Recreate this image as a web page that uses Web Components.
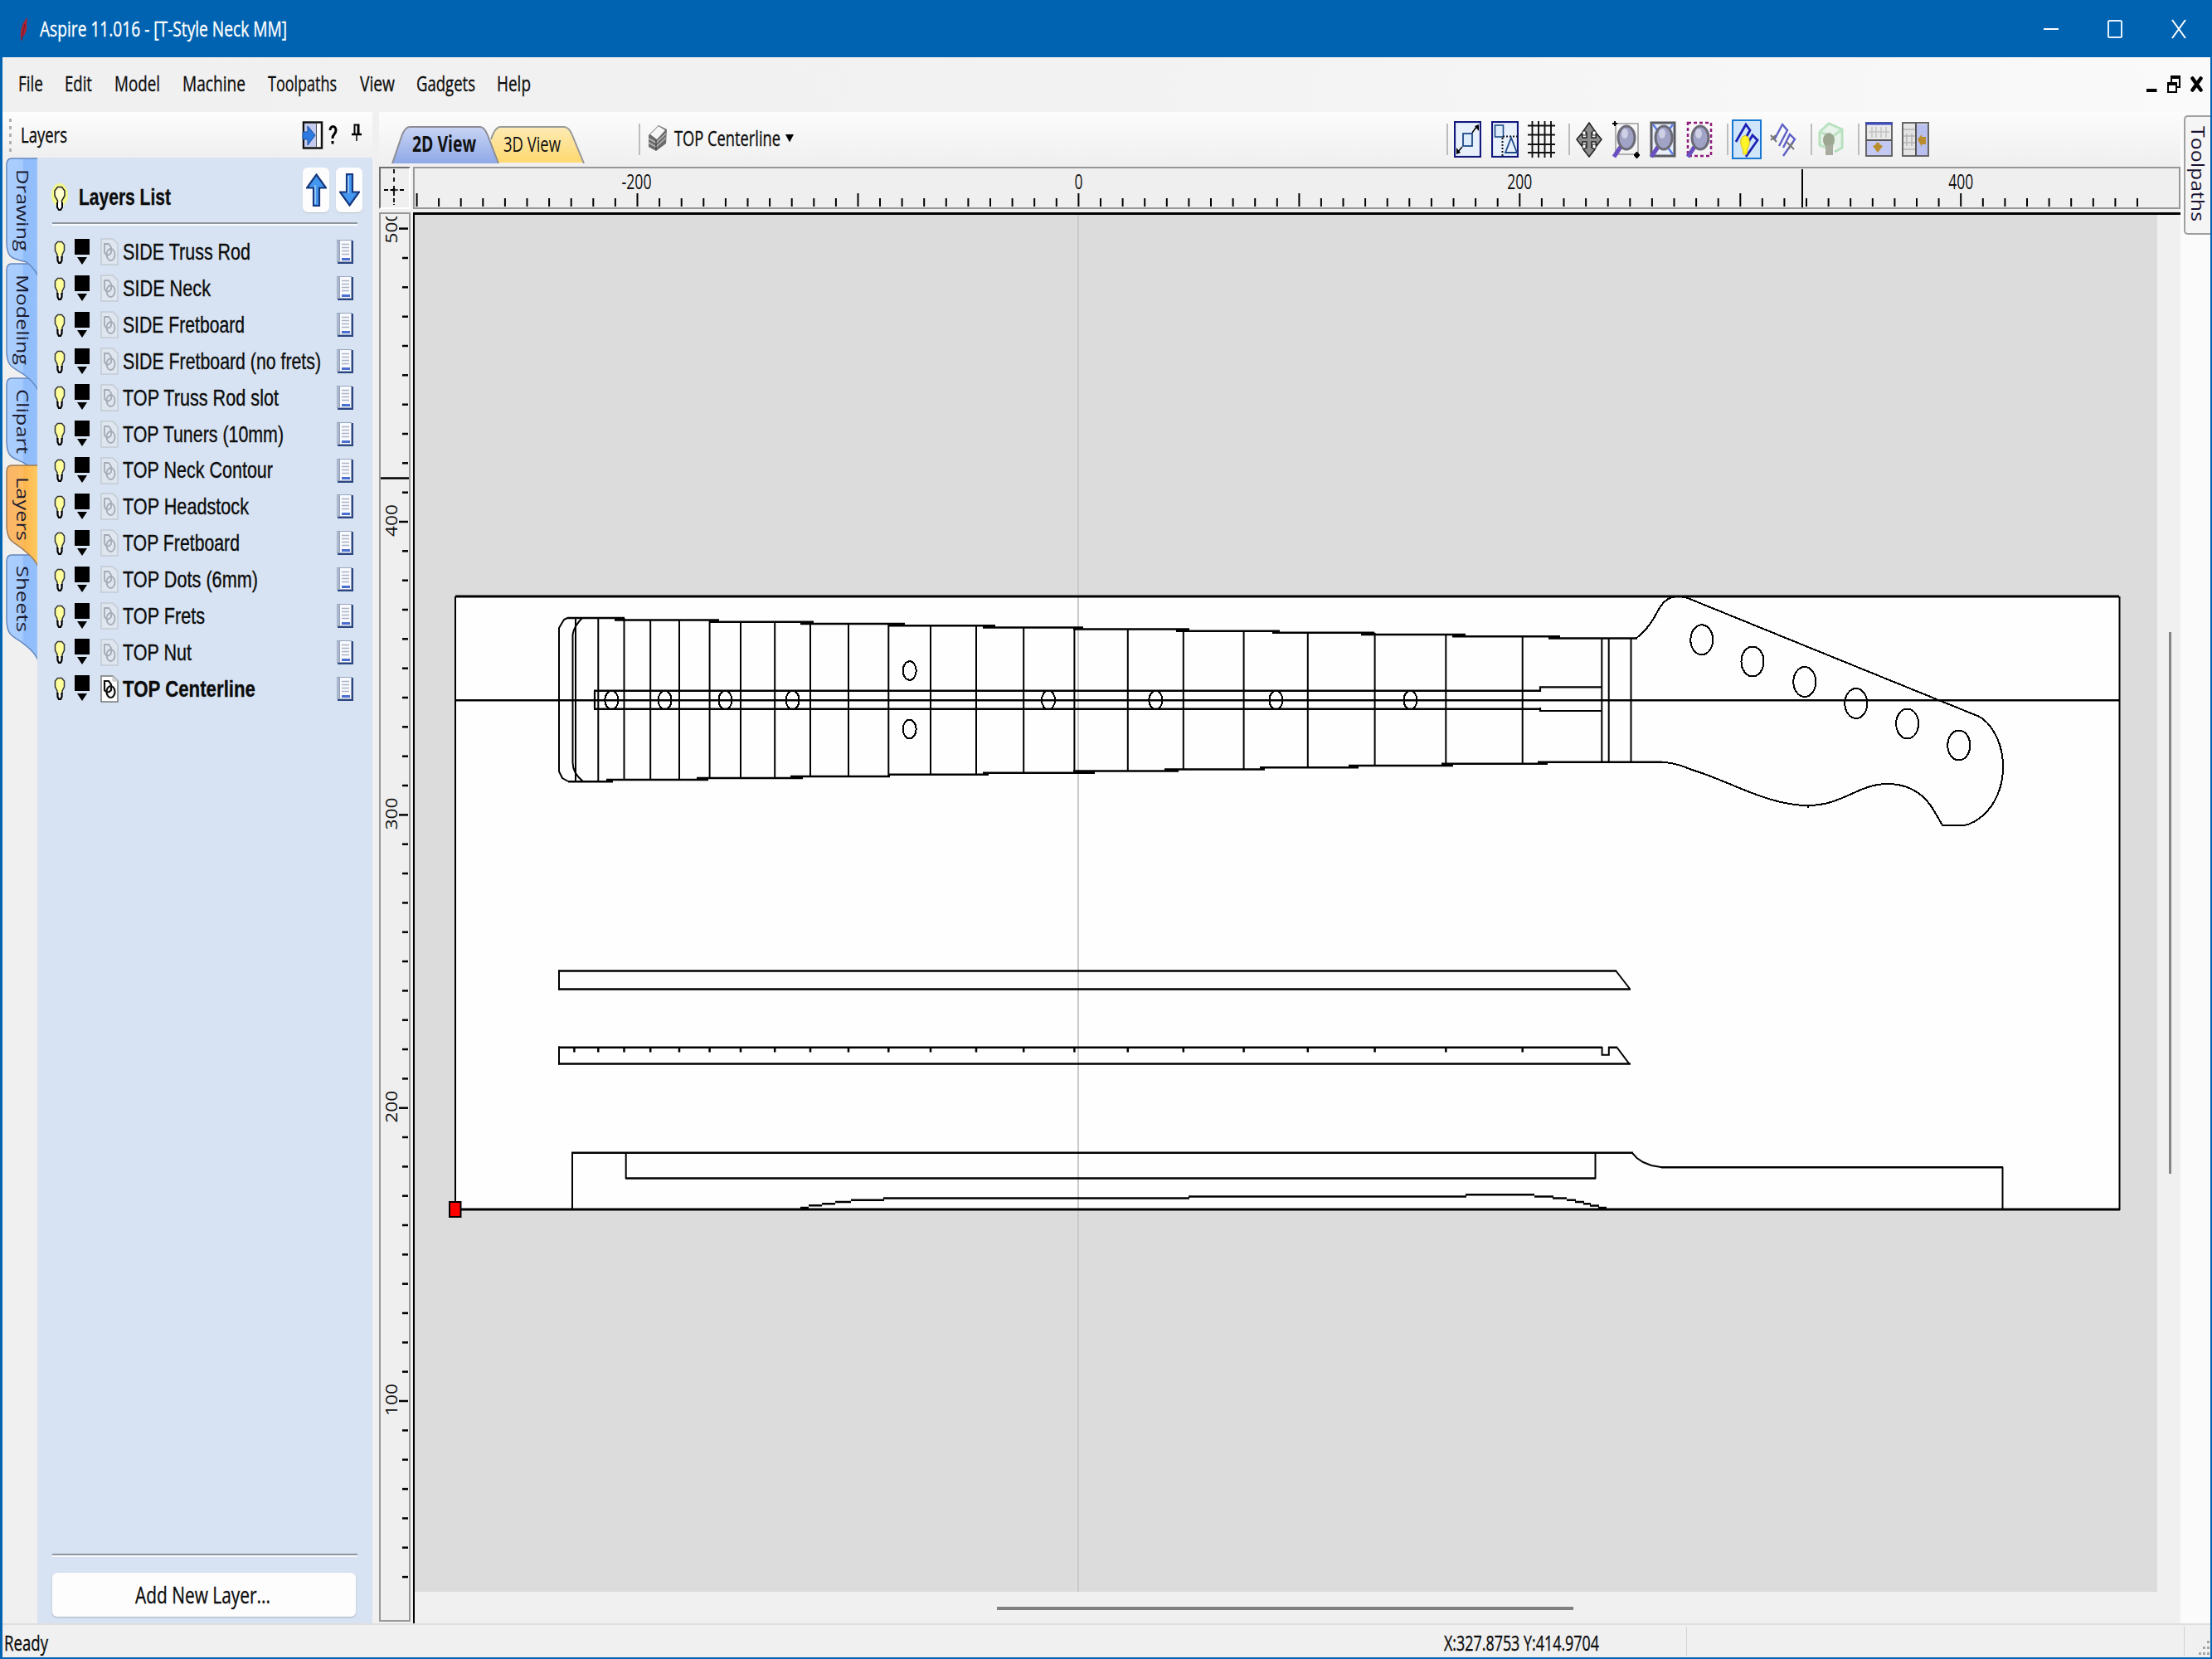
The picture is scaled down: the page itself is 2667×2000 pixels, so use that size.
<!DOCTYPE html>
<html lang="en">
<head>
<meta charset="utf-8">
<title>Aspire 11.016 - [T-Style Neck MM]</title>
<style>
	html, body { margin: 0; height: 100%; overflow: hidden; }
	body { font-family: "Open Sans", "Noto Sans", sans-serif; color: #0c0c0c; -webkit-text-stroke: .35px; }
</style>
</head>
<body>
<aspire-window></aspire-window>
<script>
const icons = {
	feather: [14, 40, `<path d="M11 6C5 12 2 22 3 31l1 4 1-5C9 26 11 20 10 15l1-9z" fill="#b3202c"/><path d="M8 14L4 34" stroke="#5c1e3c"/>`],
	minimize: [18, 24, `<path d="M0 12h18" stroke="#fff" stroke-width="2"/>`],
	maximize: [18, 24, `<rect x="1" y="2" width="16" height="20" rx="1.5" fill="none" stroke="#e4f2ff" stroke-width="2"/>`],
	close: [18, 24, `<path d="M1 1l16 22M17 1L1 23" stroke="#fff" stroke-width="2"/>`],
	docMin: [13, 20, `<path d="M0 18h12.500" stroke="#000" stroke-width="4"/>`],
	docRestore: [16, 21, `<path d="M5 8V2h10v12h-4" fill="none" stroke="#000" stroke-width="2"/><path d="M4 2h12" stroke="#000" stroke-width="4"/><rect x="1" y="9" width="10" height="11" fill="#fff" stroke="#000" stroke-width="2"/><path d="M0 10h12" stroke="#000" stroke-width="4"/>`],
	docClose: [15, 19, `<path d="M2.500 2.500l10 14M12.500 2.500l-10 14" stroke="#000" stroke-width="4.500" stroke-linecap="round"/>`],
	dock: [26, 34, `<rect x="2" y="1.500" width="22" height="31" fill="#fff" stroke="#111" stroke-width="2.500"/><rect x="3" y="3" width="14" height="28" fill="#c3cbee"/><path d="M17.500 2v30" stroke="#555"/><path d="M1 13h6V6l9 11-9 12v-7H1z" fill="#2d7ae0" stroke="#1b4f9c"/>`],
	help: [11, 23, `<path d="M2 6C2 0 9 0 9 6c0 5-4 4-4 10" fill="none" stroke="#000" stroke-width="3"/><path d="M3.500 19h3v3.500h-3z"/>`],
	pin: [12, 22, `<path d="M3.500 13V1.500h5V13" fill="#fff" stroke="#000" stroke-width="2"/><path d="M7.500 1v12" stroke="#000" stroke-width="2"/><path d="M0 13h12" stroke="#000" stroke-width="2.500"/><path d="M6 13v8" stroke="#000" stroke-width="1.500"/>`],
	bulb: [14, 28, `<path d="M4.500 1.500h5L12.500 5v7l-2.500 5v3h-6v-3l-2.500-5V5z" fill="#ffff9c" stroke="#333" stroke-width="1.500"/><path d="M4.500 19v5l1.500 3h2l1.500-3v-5" fill="#fff" stroke="#000" stroke-width="2.200"/>`],
	bulbGlow: [22, 36, `<ellipse cx="11" cy="14" rx="10" ry="14" fill="#fbff6a" opacity=".75"/><path d="M8.500 4.500h5L17 9v6l-3.500 6v4h-5v-4L5 15V9z" fill="#ffffd0" stroke="#222" stroke-width="1.500"/><path d="M8 23v6l2 3h2l2-3v-6" fill="#fff" stroke="#000" stroke-width="2"/>`],
	up: [25, 40, `<path d="M12.500 1.500L24 17.500h-8V39H9V17.500H1z" fill="#4397ee" stroke="#17377e" stroke-width="2.200"/><path d="M11 14V37" stroke="#a8d4ff" stroke-width="1.500"/>`],
	down: [25, 40, `<path d="M12.500 38.500L24 22.500h-8V1H9v21.500H1z" fill="#4397ee" stroke="#17377e" stroke-width="2.200"/><path d="M11 3v21" stroke="#a8d4ff" stroke-width="1.500"/>`],
	swatch: [18, 32, `<path d="M0 0h18v19H0zM3 22h12l-6 9z"/>`],
	link: [22, 33, `<path d="M1 1h14l6 6v25H1z" fill="#dfe6ef" stroke="#c3cad3" stroke-width="1.500"/><path d="M5 18V7h5l3 4v7q-4 5-8 0z" fill="none" stroke="#a4abb4" stroke-width="1.800"/><ellipse cx="12.500" cy="20" rx="5" ry="7" fill="none" stroke="#a4abb4" stroke-width="1.800"/>`],
	linkActive: [22, 33, `<path d="M1 1h14l6 6v25H1z" fill="#fff" stroke="#777" stroke-width="1.500"/><path d="M15 1v6h6" fill="#ddd" stroke="#bbb"/><path d="M5 18V7h5l3 4v7q-4 5-8 0z" fill="none" stroke="#111" stroke-width="2.200"/><ellipse cx="12.500" cy="20" rx="5" ry="7" fill="none" stroke="#111" stroke-width="2.200"/>`],
	doc: [20, 29, `<path d="M0 0h18v27H0z" fill="#97a5bd"/><path d="M19 1v27H1" fill="none" stroke="#2c4682" stroke-width="2"/><path d="M4 1h13v25H4z" fill="#f8faff"/><path d="M1.500 1v25" stroke="#c9d3e4"/><path d="M6 5.500h9M6 9.500h9M6 13.500h9M6 17.500h9" stroke="#aab2c4" stroke-width="1.500"/><path d="M6 23.500h10" stroke="#4a6fd0" stroke-width="3"/>`],
	stack: [24, 33, `<path d="M1 13L13 1l10 5-1 17-12 9-9-5z" fill="#6a6a6a"/><path d="M3 12L13 2l8 5-10 11z" fill="#f6f6f6"/><path d="M1 17l9 5 12-11M1 22l9 5 12-11" fill="none" stroke="#b8b8b8" stroke-width="1.500"/><path d="M10 19v12" stroke="#444" stroke-width="1.200"/>`],
	caret: [10, 10, `<path d="M0 0h10L5 9.500z"/>`],
	fitAll: [33, 44, `<rect x="1" y="1" width="31" height="42" fill="#e8f0fc" stroke="#12187c" stroke-width="2.200"/><rect x="11" y="15" width="11" height="15" fill="#dcecfa" stroke="#1e4a86" stroke-width="1.800"/><path d="M22 14l6-8M10 31l-6 7" stroke="#000" stroke-width="1.500"/><path d="M30 4v8l-5-6zM3 40v-8l5 6z"/>`],
	fitSel: [33, 44, `<rect x="1" y="1" width="31" height="42" fill="#e8f0fc" stroke="#12187c" stroke-width="2.200"/><rect x="4.500" y="5" width="10" height="14" fill="#dcecfa" stroke="#1e4a86" stroke-width="1.600"/><path d="M13.500 20v22M14 18.500h18" stroke="#111" stroke-width="2" stroke-dasharray="2 2"/><path d="M24 20l7 18H17z" fill="none" stroke="#1e4a86" stroke-width="1.800"/>`],
	grid: [33, 44, `<path d="M5.500 0v44M13 0v44M20.500 0v44M28 0v44M0 5.500h33M0 16.500h33M0 28h33M0 38h33" stroke="#111" stroke-width="1.900"/>`],
	move: [32, 43, `<path d="M16 1l7 10-4 2v6h5l1-5 6 7-6 8-1-5h-5v7l4 2-7 9-7-9 4-2v-7H8l-1 5-6-8 6-7 1 5h5v-6l-4-2z" fill="#8c8c8c" stroke="#222" stroke-width="1.500"/><path d="M8 11h4v5H8zM20 11h4v5h-4zM8 27h4v5H8zM20 27h4v5h-4z" fill="#fff" stroke="#222"/>`],
	zoomBox: [34, 45, `<path d="M4 3h27v37H4z" fill="none" stroke="#999" stroke-width="1.500"/><path d="M0 3h6M3 0v6M26 41h7M29.500 37v8" stroke="#000" stroke-width="2"/><circle cx="29.500" cy="41" r="3"/>@lens`],
	zoomPage: [32, 45, `<rect x="2" y="2" width="28" height="40" fill="#e9eefb" stroke="#5a5a62" stroke-width="3"/><path d="M4 4l6 8M28 4l-6 8M28 40l-6-8" stroke="#5a7be8" stroke-width="2.500"/>@lens`],
	zoomSel: [32, 45, `<rect x="2" y="2" width="28" height="40" fill="none" stroke="#8f1a7c" stroke-width="2.500" stroke-dasharray="4 3"/>@lens`],
	snapOn: [36, 48, `<rect x="1" y="1" width="34" height="46" fill="#cfe6fa" stroke="#1777d1" stroke-width="2"/><path d="M5 27L17 6l5 7-9 16M17 45l14-20-6-6-6 10" fill="none" stroke="#1c20b4" stroke-width="2.800"/><path d="M12 22q4-5 8 0 3 6-1 13l-1 7h-4l-1-7q-4-7-1-13z" fill="#fff32a" stroke="#e0c010"/>`],
	snapOff: [32, 43, `<path d="M5 22L15 3l6 7-10 19M16 41l14-20-6-6-8 16" fill="none" stroke="#5d5fc8" stroke-width="2.400"/><path d="M1 16l7 8M20 24l9 9M1 22l6-6M22 33l6-8" stroke="#777" stroke-width="2"/>`],
	green: [33, 42, `<path d="M3 12L14 2l16 7v22l-9 5M3 12v16l8 3M3 12l15 6 12-9M18 18v12" fill="none" stroke="#b4dfbc" stroke-width="3"/><path d="M3 12L14 2l16 7v22H3z" fill="#cbead0" opacity=".35"/><ellipse cx="14" cy="22" rx="7" ry="9" fill="#9ca690"/><path d="M10 28h9v12h-9z" fill="#a8ab9e"/>`],
	splitH: [33, 42, `<rect x="1" y="1" width="31" height="40" fill="#e9e9e9" stroke="#666" stroke-width="2"/><path d="M0 2h33" stroke="#3a4ac0" stroke-width="3"/><path d="M2 23h29v17H2z" fill="#c4c9f4"/><path d="M1 22h31" stroke="#555" stroke-width="2"/><path d="M8 6v13M13 6v13M19 6v13M25 6v13M4 12h25" stroke="#c2c2c2" stroke-width="1.500"/><path d="M9 29l4-2v-2h4v2l4 2-6 8z" fill="#b98d2c"/>`],
	splitV: [33, 42, `<rect x="1" y="1" width="31" height="40" fill="#e4e4e4" stroke="#666" stroke-width="2"/><path d="M18 3h13v37H18z" fill="#b9bfee"/><path d="M17 1v40" stroke="#555" stroke-width="2"/><path d="M2 9h14M2 17h14M2 25h14M2 33h14M6 14v15M12 14v15" stroke="#b4b4b4" stroke-width="1.500"/><path d="M19 21l5-6v3h5v9h-5v3z" fill="#b98d2c"/>`]
};
const lens = `<path d="M2 43l8-12" stroke="#6a4fc0" stroke-width="5"/><ellipse cx="17" cy="20" rx="10" ry="14" fill="#a0a2c6" stroke="#6c6c78" stroke-width="3"/><ellipse cx="15" cy="15" rx="4" ry="6" fill="#cfd0e6"/>`;

customElements.define("vec-icon",
	class extends HTMLElement {
		connectedCallback(){
			const [w, h, body] = icons[this.getAttribute("name")];
			this.attachShadow({ mode: "open" });
			this.shadowRoot.innerHTML = `
				<style>
					:host { display: block; flex: none; width: ${w}px; height: ${h}px; }
					svg { display: block; }
				</style>
				<svg width="${w}" height="${h}" viewBox="0 0 ${w} ${h}">${body.replace("@lens", lens)}</svg>
			`;
		}
	}
);

// a line of text squeezed or stretched to the length in its "w" attribute
customElements.define("fit-text",
	class extends HTMLElement {
		connectedCallback(){
			const length = parseFloat(this.getAttribute("w"));
			const size = this.getAttribute("size") || 25;
			this.attachShadow({ mode: "open" });
			this.shadowRoot.innerHTML = `
				<style>
					:host { display: block; flex: none; width: ${length}px; font-size: ${size}px; line-height: 1.4; white-space: nowrap; }
					span { display: inline-block; vertical-align: top; transform-origin: 0 0; }
				</style>
				<span><slot></slot></span>
			`;
			const span = this.shadowRoot.querySelector("span");
			span.style.transform = `scaleX(${length / span.getBoundingClientRect().width})`;
		}
	}
);

customElements.define("title-bar",
	class extends HTMLElement {
		connectedCallback(){
			this.attachShadow({ mode: "open" });
			this.shadowRoot.innerHTML = `
				<style>
					:host { display: flex; align-items: center; height: 69px; padding: 0 31px 0 22px; box-sizing: border-box; background: #0063b1; color: #fff; }
					.buttons { display: flex; gap: 59px; margin-left: auto; }
				</style>
				<vec-icon name="feather"></vec-icon>
				<fit-text w="298" style="margin-left:12px">Aspire 11.016 - [T-Style Neck MM]</fit-text>
				<div class="buttons">
					<vec-icon name="minimize"></vec-icon>
					<vec-icon name="maximize"></vec-icon>
					<vec-icon name="close"></vec-icon>
				</div>
			`;
		}
	}
);

customElements.define("menu-bar",
	class extends HTMLElement {
		connectedCallback(){
			const items = [["File", 30, 26], ["Edit", 33, 27], ["Model", 55, 27], ["Machine", 76, 27], ["Toolpaths", 83, 28], ["View", 42, 26], ["Gadgets", 71, 26], ["Help", 41, 0]];
			this.attachShadow({ mode: "open" });
			this.shadowRoot.innerHTML = `
				<style>
					:host { display: flex; align-items: center; height: 66px; padding: 0 9px 3px 19px; box-sizing: border-box; background: linear-gradient(90deg, #f0f0f0, #f2f2f2 50%, #fafafa); }
					.buttons { display: flex; gap: 12px; margin: 1px 0 0 auto; align-items: center; }
				</style>
				${items.map(([text, w, gap]) => `<fit-text w="${w}" style="margin-right:${gap}px">${text}</fit-text>`).join("")}
				<div class="buttons">
					<vec-icon name="docMin"></vec-icon>
					<vec-icon name="docRestore"></vec-icon>
					<vec-icon name="docClose"></vec-icon>
				</div>
			`;
		}
	}
);

customElements.define("side-tabs",
	class extends HTMLElement {
		connectedCallback(){
			// name, top, end of the straight edge, bottom, text start, text length
			const tabs = [
				["Sheets", 668, 760, 796, 682, 80],
				["Clipart", 455, 545, 577, 469, 78],
				["Modeling", 317, 436, 471, 331, 109],
				["Drawing", 190, 305, 333, 204, 99],
				["Layers", 560, 646, 683, 575, 77]
			];
			this.attachShadow({ mode: "open" });
			this.shadowRoot.innerHTML = `
				<style>
					:host { display: block; width: 42px; background: #f0f0f0; }
					svg { display: block; }
					text { font-size: 20px; }
				</style>
				<svg width="42" height="700" viewBox="3 190 42 700">
					<defs>
						<linearGradient id="blue"><stop offset="0" stop-color="#abd0ff"/><stop offset=".5" stop-color="#a6cbfd"/><stop offset=".55" stop-color="#8fbcfb"/><stop offset="1" stop-color="#94c0fb"/></linearGradient>
						<linearGradient id="orange"><stop offset="0" stop-color="#f9b468"/><stop offset=".5" stop-color="#fdbb62"/><stop offset=".55" stop-color="#fdb54e"/><stop offset="1" stop-color="#ffca60"/></linearGradient>
					</defs>
					${tabs.map(([name, top, edge, bottom, start, length]) => `
						<path d="M46 ${top + 1}H14Q8 ${top + 1} 8 ${top + 9}V${edge - 14}C8 ${edge + 10} 18 ${edge + 6} 32 ${bottom - 17}Q42 ${bottom - 9} 46 ${bottom}" fill="url(#${name === "Layers" ? "orange" : "blue"})" stroke="${name === "Layers" ? "#9a7b58" : "#6487bd"}" stroke-width="1.500"/>
						<text transform="translate(20 ${start}) rotate(90)" textLength="${length}" lengthAdjust="spacingAndGlyphs" fill="#1a1a30">${name}</text>
					`).join("")}
				</svg>
			`;
		}
	}
);

customElements.define("layer-row",
	class extends HTMLElement {
		connectedCallback(){
			const active = this.hasAttribute("active");
			this.attachShadow({ mode: "open" });
			this.shadowRoot.innerHTML = `
				<style>
					:host { display: flex; align-items: center; height: 43.87px; font-weight: ${active ? "bold" : "normal"}; }
				</style>
				<vec-icon name="bulb"></vec-icon>
				<vec-icon name="swatch" style="margin-left:11px"></vec-icon>
				<vec-icon name="${active ? "linkActive" : "link"}" style="margin-left:13px"></vec-icon>
				<fit-text w="${this.getAttribute("w")}" size="28" style="margin-left:5px"><slot></slot></fit-text>
				<vec-icon name="doc" style="margin-left:auto"></vec-icon>
			`;
		}
	}
);

customElements.define("layers-panel",
	class extends HTMLElement {
		connectedCallback(){
			const layers = [
				["SIDE Truss Rod", 154], ["SIDE Neck", 106], ["SIDE Fretboard", 147], ["SIDE Fretboard (no frets)", 239],
				["TOP Truss Rod slot", 188], ["TOP Tuners (10mm)", 194], ["TOP Neck Contour", 181], ["TOP Headstock", 152],
				["TOP Fretboard", 141], ["TOP Dots (6mm)", 163], ["TOP Frets", 99], ["TOP Nut", 83], ["TOP Centerline", 160]
			];
			this.attachShadow({ mode: "open" });
			this.shadowRoot.innerHTML = `
				<style>
					:host { display: flex; flex-direction: column; width: 446px; }
					.caption { display: flex; align-items: center; height: 55px; box-sizing: border-box; padding: 0 13px 0 8px; background: linear-gradient(#fdfdfd, #efefef); }
					.grip { display: flex; flex-direction: column; gap: 5px; width: 3px; margin-right: 11px; }
					.grip i { height: 4px; background: #b4aeb4; }
					.main { display: flex; flex: 1; }
					.list { display: flex; flex-direction: column; flex: 1; padding: 0 18px 8px 18px; background: #d7e3f2; font-family: "Liberation Sans", Arial, sans-serif; }
					.head { display: flex; height: 78px; align-items: center; font-weight: bold; }
					.button { display: grid; place-items: center; width: 32px; height: 54px; border-radius: 6px; background: #fdfdfd; box-shadow: 0 1px 1px #b9c2cd; }
					hr { width: 368px; height: 2px; margin: 0; border: 0; background: #8f96a0; border-bottom: 2px solid #f7faff; }
					.rows { padding: 10px 5px 0 2px; }
					.add { display: grid; place-items: center; width: 366px; height: 53px; margin-top: 19px; border-radius: 6px; background: #fdfdfd; box-shadow: 0 1px 2px #a9b3bf; font-family: "Open Sans", sans-serif; }
				</style>
				<div class="caption">
					<div class="grip"><i></i><i></i><i></i><i></i><i></i></div>
					<fit-text w="56">Layers</fit-text>
					<vec-icon name="dock" style="margin-left:auto"></vec-icon>
					<vec-icon name="help" style="margin-left:6px"></vec-icon>
					<vec-icon name="pin" style="margin:0 0 5px 17px"></vec-icon>
				</div>
				<div class="main">
					<side-tabs></side-tabs>
					<div class="list">
						<div class="head">
							<vec-icon name="bulbGlow" style="margin:19px 0 0 -2px"></vec-icon>
							<fit-text w="111" size="28" style="margin:18px 0 0 12px">Layers List</fit-text>
							<div class="button" style="margin-left:auto"><vec-icon name="up"></vec-icon></div>
							<div class="button" style="margin:0 -6px 0 8px"><vec-icon name="down"></vec-icon></div>
						</div>
						<hr>
						<div class="rows">
							${layers.map(([name, w], i) => `<layer-row w="${w}" ${i === 12 ? "active" : ""}>${name}</layer-row>`).join("")}
						</div>
						<hr style="margin-top:auto">
						<div class="add"><fit-text w="163" size="28" style="margin-right:3px">Add New Layer...</fit-text></div>
					</div>
				</div>
			`;
		}
	}
);

customElements.define("view-toolbar",
	class extends HTMLElement {
		connectedCallback(){
			// icon or separator with the space in front of it
			const tools = [
				["|", 0], ["fitAll", 7], ["fitSel", 12], ["grid", 11], ["|", 16], ["move", 7], ["zoomBox", 12], ["zoomPage", 11],
				["zoomSel", 12], ["|", 17], ["snapOn", 4], ["snapOff", 10], ["|", 17], ["green", 6], ["|", 16], ["splitH", 7], ["splitV", 11]
			];
			this.attachShadow({ mode: "open" });
			this.shadowRoot.innerHTML = `
				<style>
					:host { display: flex; align-items: center; height: 66px; box-sizing: border-box; padding: 0 303px 0 15px; background: linear-gradient(#fcfcfc, #efefef); }
					.tabs { display: block; align-self: flex-end; margin-bottom: 4px; }
					.tabs text { font-size: 26px; fill: #111; }
					.sep { width: 2px; height: 38px; background: #bdbdbd; }
					.tools { display: flex; align-items: center; height: 48px; margin-left: auto; }
				</style>
				<svg class="tabs" width="234" height="46" viewBox="472 151 234 46">
					<defs>
						<linearGradient id="a" x2="0" y2="1"><stop stop-color="#c8d4f4"/><stop offset="1" stop-color="#8fa9e8"/></linearGradient>
						<linearGradient id="b" x2="0" y2="1"><stop stop-color="#fdebb4"/><stop offset="1" stop-color="#ffd970"/></linearGradient>
					</defs>
					<path d="M592 196V170Q597 153 603 153H680Q686 153 690 163L704 196z" fill="url(#b)"/>
					<path d="M592 168Q597 153 603 153H680Q686 153 690 163L704 197" fill="none" stroke="#9a9a9a" stroke-width="2"/>
					<path d="M473 197L485 162Q489 153 494 153H579Q584 153 588 163L601 197z" fill="url(#a)"/>
					<path d="M473 197L485 162Q489 153 494 153H579Q584 153 588 163L601 197" fill="none" stroke="#8d8d96" stroke-width="2"/>
					<text x="497" y="182.500" font-weight="bold" textLength="77" lengthAdjust="spacingAndGlyphs">2D View</text>
					<text x="607" y="182.500" textLength="69" lengthAdjust="spacingAndGlyphs">3D View</text>
				</svg>
				<div class="sep" style="margin-left:64px"></div>
				<vec-icon name="stack" style="margin:0 0 4px 9px"></vec-icon>
				<fit-text w="128" style="margin:-4px 0 0 8px">TOP Centerline</fit-text>
				<vec-icon name="caret" style="margin:-2px 0 0 6px"></vec-icon>
				<div class="tools">
					${tools.map(([name, gap]) => name === "|"
						? `<div class="sep" style="margin-left:${gap}px"></div>`
						: `<vec-icon name="${name}" style="margin-left:${gap}px"></vec-icon>`).join("")}
				</div>
			`;
		}
	}
);

customElements.define("view-ruler",
	class extends HTMLElement {
		connectedCallback(){
			const vertical = this.hasAttribute("vertical");
			this.attachShadow({ mode: "open" });
			this.shadowRoot.innerHTML = `
				<style>
					:host { display: block; flex: none; }
					svg { display: block; box-sizing: border-box; background: #efefef; border: 2px solid #989898; }
					text { font-size: 26px; fill: #111; text-anchor: middle; }
					.up { font-size: 20.500px; }
				</style>
				${vertical ? this.vertical() : this.horizontal()}
			`;
		}
		horizontal(){
			let marks = "";
			for(let v = -300; v <= 480; v += 10){
				const x = 1299.4 + v * 2.6595;
				marks += `<path d="M${x.toFixed(1)} ${v % 100 ? 239 : 233}V249"/>`;
			}
			const labels = [[-200, 36], [0, 10], [200, 30], [400, 30]].map(([v, w]) =>
				`<text x="${(1299.4 + v * 2.6595 - (v < 0 ? 1 : 0)).toFixed(1)}" y="228" textLength="${w}" lengthAdjust="spacingAndGlyphs">${v}</text>`).join("");
			return `<svg width="2131" height="51" viewBox="499 203 2127 47"><g stroke="#000" stroke-width="2">${marks}<path d="M2172 204V250"/></g>${labels}</svg>`;
		}
		vertical(){
			let marks = "";
			for(let v = 500; v >= 40; v -= 10){
				const y = 629 + (400 - v) * 3.5335;
				marks += `<path d="M${v % 100 ? 485 : 481} ${y.toFixed(1)}H492"/>`;
			}
			const labels = [500, 400, 300, 200, 100].map(v =>
				`<text class="up" transform="translate(479 ${(627.500 + (400 - v) * 3.5335).toFixed(1)}) rotate(-90)" textLength="39" lengthAdjust="spacingAndGlyphs">${v}</text>`).join("");
			return `<svg width="38" height="1699" viewBox="459 258 34 1695"><g stroke="#000" stroke-width="2.500">${marks}<path d="M459 576.500H493"/></g>${labels}<path d="M460 258H480V261H460z" fill="#efefef"/></svg>`;
		}
	}
);

customElements.define("neck-drawing",
	class extends HTMLElement {
		connectedCallback(){
			const frets = [721.3, 752.5, 784.2, 819, 855.6, 893, 934.2, 977, 1023, 1071.3, 1122, 1177, 1234.2, 1295.4, 1359.8, 1426.8, 1499.6, 1576.8, 1657.6, 1743.3, 1835.7];
			// each step: from, to, y
			const topEdge = [[684, 753, 745], [716, 867, 747.5], [855, 981, 749.7], [965, 1091, 752], [1071, 1200, 754.2], [1185, 1306, 756.4], [1294, 1434, 758.5], [1418, 1543, 760.7], [1534, 1657, 762.8], [1641, 1767, 765], [1751, 1881, 767.3], [1867, 1974, 769.4]];
			topEdge[1][0] = 741;
			const bottomEdge = [[685, 739, 942.3], [731, 854, 940], [840, 968, 938], [953, 1073, 936], [1071, 1192, 933.8], [1185, 1320, 931.7], [1294, 1421, 929.6], [1404, 1525, 927.4], [1519, 1638, 925.2], [1626, 1752, 922.9], [1738, 1866, 920.8], [1854, 2004, 918.7]];
			const profile = [[965, 975, 1456], [975, 991, 1453.3], [991, 1007, 1451.3], [1007, 1026, 1449], [1026, 1066, 1446.7], [1065, 1434, 1444.6], [1433, 1768, 1442.4], [1767, 1850, 1440.3], [1850, 1873, 1442.4], [1872, 1889, 1444.6], [1889, 1900, 1446.7], [1899, 1910, 1449], [1909, 1918, 1451.2], [1917, 1928, 1453.4], [1927, 1937, 1456]];
			const steps = list => list.map(([a, b, y]) => `M${a} ${y}H${b}`).join("");
			const fretY = (list, x) => list.find(([, b]) => x <= b + 1)[2];
			const dots = [737.3, 801.6, 874.4, 955.6, 1264, 1393.3, 1538.4, 1700.4].map(x => [x, 844]).concat([[1096.7, 808.5], [1096.7, 879]]);
			const tuners = [[2051.8, 771.3], [2113, 797.5], [2175.8, 822], [2237.8, 848], [2299.6, 872.5], [2361.8, 898.5]];

			this.attachShadow({ mode: "open" });
			this.shadowRoot.innerHTML = `
				<style>
					:host { display: block; }
					svg { display: block; background: #dcdcdc; }
				</style>
				<svg width="2101" height="1660" viewBox="500 259 2101 1660" fill="none" stroke="#000" stroke-width="2">
					<rect x="549" y="719" width="2006" height="739" fill="#fefefe" stroke="none"/>
					<path d="M1300 259V1919" stroke="#c9c9c9"/>
					<path d="M549 1458V719M2555.500 719V1459"/>
					<path d="M549 719H2555M549 1458H2556" stroke-width="3"/>
					<path d="M549 844.300H2555" stroke-width="2.500"/>

					<path d="${steps(topEdge)}${steps(bottomEdge)}" stroke-width="2.500"/>
					<path d="M684 745L680 747 674 757V930L678 938 685 942"/>
					<path d="M702 745Q690 757 690.500 768V918Q690 932 703 942M694 745V942"/>
					<path d="${frets.map(x => `M${x} ${fretY(topEdge, x)}V${fretY(bottomEdge, x)}`).join("")}"/>
					<path d="M1931.300 769V919M1939.700 769V919M1966.500 769V919"/>
					<path d="M717 832.700V854.700M1857 834V828.300H1931M1857 853V857H1931" stroke-width="2.200"/>
					<path d="M716 832.800H1858M716 854.800H1858" stroke-width="2.500"/>
					<g shape-rendering="crispEdges">
						${dots.map(([x, y]) => `<ellipse cx="${x}" cy="${y}" rx="8" ry="11.300"/>`).join("")}
						${tuners.map(([x, y]) => `<ellipse cx="${x}" cy="${y}" rx="13.500" ry="18"/>`).join("")}
						<path d="M1973 769.300C1985 760 1993 748 1998 738 2003 728 2008 722 2016 720Q2024 718 2034 720.700L2381 861.700C2394 866 2402 877 2408 890Q2415 905 2415 925C2415 950 2405 970 2392 982Q2380 993 2368 995H2342L2338 988 2331 976C2322 961 2305 945 2276 945 2240 945 2222 971 2180 971 2130 971 2085 941 2038.800 927.700Q2022 920 2004 918.700M2179.500 970V974"/>
					</g>

					<path d="M674 1169.500V1193.500M1948 1170L1965 1192M674 1261.500V1283.500M1931.600 1262V1271.700H1939.800V1262M1949 1262L1964 1282"/>
					<path d="M673 1170.500H1949M673 1192.500H1966M673 1262.700H1932M1939 1262.700H1950M673 1282.500H1966" stroke-width="2.500"/>
					<path d="${[692.4, ...frets].map(x => `M${x} 1263V1268.500`).join("")}" stroke-width="2.500"/>
					<path d="M690 1458V1389M754.700 1390V1421M1923.500 1390V1421M1968 1390L1973.500 1396 1981 1401 1991 1405 2004 1407.300M2414.500 1407V1458"/>
					<path d="M689 1389.700H1969M754 1420.500H1924M2003 1407.300H2415${steps(profile)}" stroke-width="2.500"/>
					<rect x="542" y="1449" width="13.500" height="18" fill="#f00"/>
				</svg>
			`;
		}
	}
);

customElements.define("drawing-view",
	class extends HTMLElement {
		connectedCallback(){
			this.attachShadow({ mode: "open" });
			this.shadowRoot.innerHTML = `
				<style>
					:host { display: flex; flex-direction: column; width: 2172px; }
					.top { display: flex; gap: 3px; height: 51px; margin-bottom: 4px; }
					.corner { display: block; width: 34px; height: 47px; border: 2px solid #fff; border-top-color: #6e6e6e; border-left-color: #6e6e6e; background: #efefef; }
					.row { display: flex; flex: 1; gap: 3px; }
					.canvas { display: grid; grid-template-columns: 2101px 28px; grid-template-rows: 1660px 38px; border-top: 3px solid #000; border-left: 2px solid #000; background: #f0f0f0; }
					.vbar, .hbar { display: flex; }
					.vbar i { width: 3px; height: 653px; margin: 503px 0 0 14px; background: #858585; }
					.hbar i { width: 695px; height: 4px; margin: 18px 0 0 702px; background: #808080; }
				</style>
				<view-toolbar></view-toolbar>
				<div class="top">
					<svg class="corner" viewBox="0 0 34 47"><path d="M16 1v5M16 11v6M16 21v12M16 36v8M4 26h5M11.500 26h9M23 26h5" stroke="#000" stroke-width="1.800" stroke-dasharray="5 2"/><circle cx="16" cy="26" r="2"/></svg>
					<view-ruler></view-ruler>
				</div>
				<div class="row">
					<view-ruler vertical></view-ruler>
					<div class="canvas">
						<neck-drawing></neck-drawing>
						<div class="vbar"><i></i></div>
						<div class="hbar"><i></i></div>
					</div>
				</div>
			`;
		}
	}
);

customElements.define("toolpaths-strip",
	class extends HTMLElement {
		connectedCallback(){
			this.attachShadow({ mode: "open" });
			this.shadowRoot.innerHTML = `
				<style>
					:host { display: block; flex: 1; background: #fbfbfb; }
					.tab { height: 140px; margin: 4px 0 0 4px; border: 2px solid #a0a0a0; border-right: 0; border-radius: 5px 0 0 5px; background: #f5f5f5; }
					svg { display: block; }
					text { font-size: 21px; fill: #1a1030; }
				</style>
				<div class="tab"><svg width="30" height="140" viewBox="2635 141 30 140"><text transform="translate(2642 152) rotate(90)" textLength="115" lengthAdjust="spacingAndGlyphs">Toolpaths</text></svg></div>
			`;
		}
	}
);

customElements.define("status-bar",
	class extends HTMLElement {
		connectedCallback(){
			this.attachShadow({ mode: "open" });
			this.shadowRoot.innerHTML = `
				<style>
					:host { display: flex; align-items: center; height: 41px; box-sizing: border-box; padding-left: 2px; border-top: 2px solid #dedede; background: #f0f0f0; }
					fit-text { margin-top: 4px; }
					.line { width: 1px; height: 35px; background: #d2d2d2; }
				</style>
				<fit-text w="53">Ready</fit-text>
				<fit-text w="187" style="margin-left:1683px">X:327.8753 Y:414.9704</fit-text>
				<div class="line" style="margin-left:105px"></div>
				<div class="line" style="margin-left:599px"></div>
				<svg width="14" height="20" style="margin:16px 0 0 17px"><path d="M10 1h3v3h-3zM5 8h3v3H5zM10 8h3v3h-3zM0 15h3v3H0zM5 15h3v3H5zM10 15h3v3h-3z" fill="#a6a6a6"/></svg>
			`;
		}
	}
);

customElements.define("aspire-window",
	class extends HTMLElement {
		connectedCallback(){
			this.attachShadow({ mode: "open" });
			this.shadowRoot.innerHTML = `
				<style>
					:host { display: flex; flex-direction: column; width: 2667px; height: 2000px; overflow: hidden; background: #0063b1; }
					.frame { display: flex; flex-direction: column; margin: 0 2px 2px 3px; background: #f0f0f0; }
					.work { display: flex; height: 1822px; }
					drawing-view { margin-left: 8px; }
				</style>
				<title-bar></title-bar>
				<div class="frame">
					<menu-bar></menu-bar>
					<div class="work">
						<layers-panel></layers-panel>
						<drawing-view></drawing-view>
						<toolpaths-strip></toolpaths-strip>
					</div>
					<status-bar></status-bar>
				</div>
			`;
		}
	}
);
</script>
</body>
</html>
